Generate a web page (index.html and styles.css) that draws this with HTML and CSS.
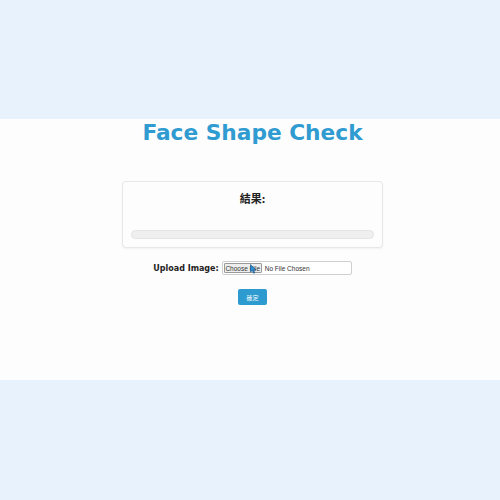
FILE: index.html
```html
<!DOCTYPE html>
<html>
<head>
<meta charset="utf-8">
<link rel="stylesheet" href="styles.css">
</head>
<body>
<div class="page">
  <h1 class="title">Face Shape Check</h1>
  <div class="card">
    <h2 class="result">結果:</h2>
    <div class="bar"></div>
  </div>
  <div class="upload">
    <span class="label">Upload Image:</span>
    <div class="file">
      <span class="choose">Choose File</span>
      <span class="none">No File Chosen</span>
      <svg class="cursor" width="7" height="10" viewBox="0 0 7 10"><path d="M0.5 0.5 L0.5 8 L2.3 6.4 L3.6 9.3 L4.8 8.8 L3.6 6 L6 6 Z" fill="#2a8fd8" stroke="#1b4f7a" stroke-width="0.6"/></svg>
    </div>
  </div>
  <div class="actions">
    <button class="ok">確定</button>
  </div>
</div>
</body>
</html>
```
FILE: styles.css
```css
html, body { margin: 0; padding: 0; }
body {
  background: #e8f2fd;
  font-family: "DejaVu Sans", Verdana, sans-serif;
  width: 500px;
  height: 500px;
}
.page {
  margin-top: 119px;
  height: 261px;
  background: #fdfdfd;
  padding-top: 2px;
  padding-left: 5px;
  box-sizing: border-box;
}
.title {
  margin: 0;
  font-size: 21.7px;
  line-height: 24px;
  font-weight: bold;
  color: #2f9bd0;
  text-align: center;
}
.card {
  width: 261px;
  height: 67px;
  box-sizing: border-box;
  margin: 36px auto 0;
  border: 1px solid #e7e7e7;
  border-radius: 4px;
  box-shadow: 0 1px 2px rgba(0,0,0,0.05);
  padding: 8px 8px 0;
  background: #fdfdfd;
}
.result {
  margin: 0;
  font-family: "Noto Sans CJK TC", "Noto Sans CJK SC", sans-serif;
  font-size: 11px;
  line-height: 16px;
  font-weight: bold;
  color: #222;
  text-align: center;
}
.bar {
  margin-top: 24px;
  height: 9px;
  border-radius: 5px;
  background: #efefef;
  border: 1px solid #e4e4e4;
  box-sizing: border-box;
}
.upload {
  display: flex;
  justify-content: center;
  align-items: center;
  gap: 3px;
  margin-top: 13px;
}
.label {
  font-size: 8px;
  font-weight: bold;
  color: #222;
}
.file {
  position: relative;
  width: 130px;
  height: 14px;
  box-sizing: border-box;
  border: 1px solid #cfcfcf;
  border-radius: 2px;
  background: #fff;
  display: flex;
  align-items: center;
  padding-left: 1px;
  gap: 3px;
  font-family: "Liberation Sans", Arial, sans-serif;
  font-size: 6.5px;
  color: #333;
}
.choose {
  height: 10px;
  width: 38px;
  box-sizing: border-box;
  border: 1px solid #9a9a9a;
  border-radius: 1px;
  background: #eeeeee;
  display: flex;
  align-items: center;
  justify-content: center;
}
.cursor {
  position: absolute;
  left: 27px;
  top: 2px;
}
.actions {
  display: flex;
  justify-content: center;
  margin-top: 14px;
}
.ok {
  width: 29px;
  height: 16px;
  border: 0;
  border-radius: 2px;
  background: #2e9bd0;
  color: #fff;
  font-family: "Noto Sans CJK TC", "Noto Sans CJK SC", sans-serif;
  font-size: 6px;
  padding: 0;
}
```
